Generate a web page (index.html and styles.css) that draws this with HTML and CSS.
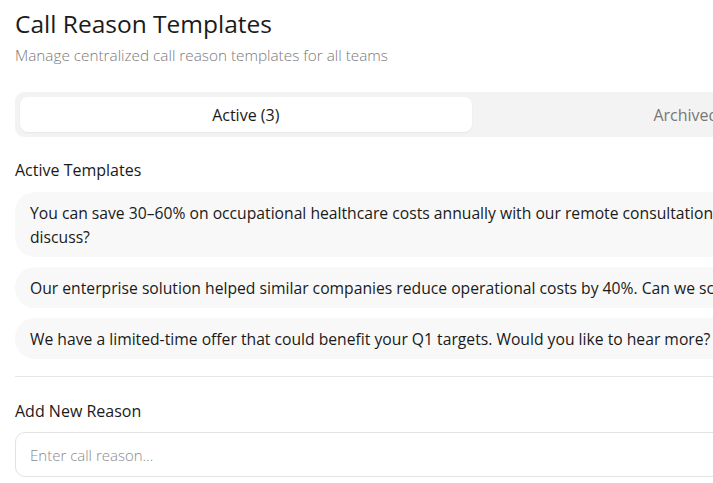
FILE: index.html
```html
<!DOCTYPE html>
<html lang="en">
<head>
<meta charset="utf-8">
<title>Call Reason Templates</title>
<link rel="stylesheet" href="styles.css">
</head>
<body>
<main class="page">
  <header class="head">
    <h1 class="title">Call Reason Templates</h1>
    <p class="subtitle">Manage centralized call reason templates for all teams</p>
  </header>

  <div class="tabs">
    <button class="tab tab-active">Active (3)</button>
    <button class="tab">Archived (0)</button>
  </div>

  <section class="section">
    <h2 class="section-title">Active Templates</h2>
    <ul class="list">
      <li class="item"><span class="item-text">You can save 30–60% on occupational healthcare costs annually with our remote consultation service. Can we discuss?</span></li>
      <li class="item"><span class="item-text">Our enterprise solution helped similar companies reduce operational costs by 40%. Can we schedule a call?</span></li>
      <li class="item"><span class="item-text">We have a limited-time offer that could benefit your Q1 targets. Would you like to hear more?</span></li>
    </ul>
  </section>

  <hr class="divider">

  <section class="section section-add">
    <h2 class="section-title">Add New Reason</h2>
    <input class="input" type="text" placeholder="Enter call reason...">
  </section>
</main>
</body>
</html>
```

FILE: styles.css
```css
html, body {
  margin: 0;
  padding: 0;
  overflow: hidden;
  background: #ffffff;
}
body {
  font-family: "Open Sans", "Noto Sans", sans-serif;
  color: #1a1a1a;
}
.page {
  width: 913px;
  padding: 8px 15px 0 15px;
}
.head {
  display: flex;
  flex-direction: column;
  gap: 5px;
}
.title {
  margin: 0;
  font-size: 24.5px;
  font-weight: 500;
  line-height: 32px;
  color: #1b1b1b;
}
.subtitle {
  margin: 0;
  font-size: 15.3px;
  font-weight: 300;
  line-height: 20px;
  color: #7a7a7a;
}
.tabs {
  margin-top: 27px;
  display: grid;
  grid-template-columns: 1fr 1fr;
  background: #f3f3f3;
  border-radius: 9px;
  padding: 5px;
  height: 45px;
  box-sizing: border-box;
}
.tab {
  border: 0;
  background: transparent;
  font-family: inherit;
  font-size: 16px;
  color: #777;
  border-radius: 8px;
  padding: 0;
}
.tab-active {
  background: #ffffff;
  color: #1a1a1a;
  box-shadow: 0 1px 2px rgba(0,0,0,0.05);
}
.section {
  margin-top: 22px;
}
.section-add {
  margin-top: 23px;
}
.section-title {
  margin: 0;
  font-size: 16px;
  font-weight: 500;
  line-height: 22px;
}
.list {
  list-style: none;
  margin: 11px 0 0 0;
  padding: 0;
  display: flex;
  flex-direction: column;
  gap: 10px;
}
.item {
  background: #f8f8f8;
  border-radius: 20px;
  padding: 8.5px 78px 8.5px 15px;
  font-size: 15.7px;
  line-height: 24px;
}
.divider {
  border: 0;
  border-top: 1px solid #e6e6e6;
  margin: 17px 0 0 0;
}
.input {
  margin-top: 10px;
  display: block;
  width: 100%;
  box-sizing: border-box;
  height: 45px;
  border: 1px solid #e2e2e2;
  border-radius: 10px;
  padding: 0 14px;
  font-family: inherit;
  font-size: 15px;
  color: #1a1a1a;
  background: #fff;
}
.input::placeholder {
  color: #8a8a8a;
  font-weight: 300;
}
```
